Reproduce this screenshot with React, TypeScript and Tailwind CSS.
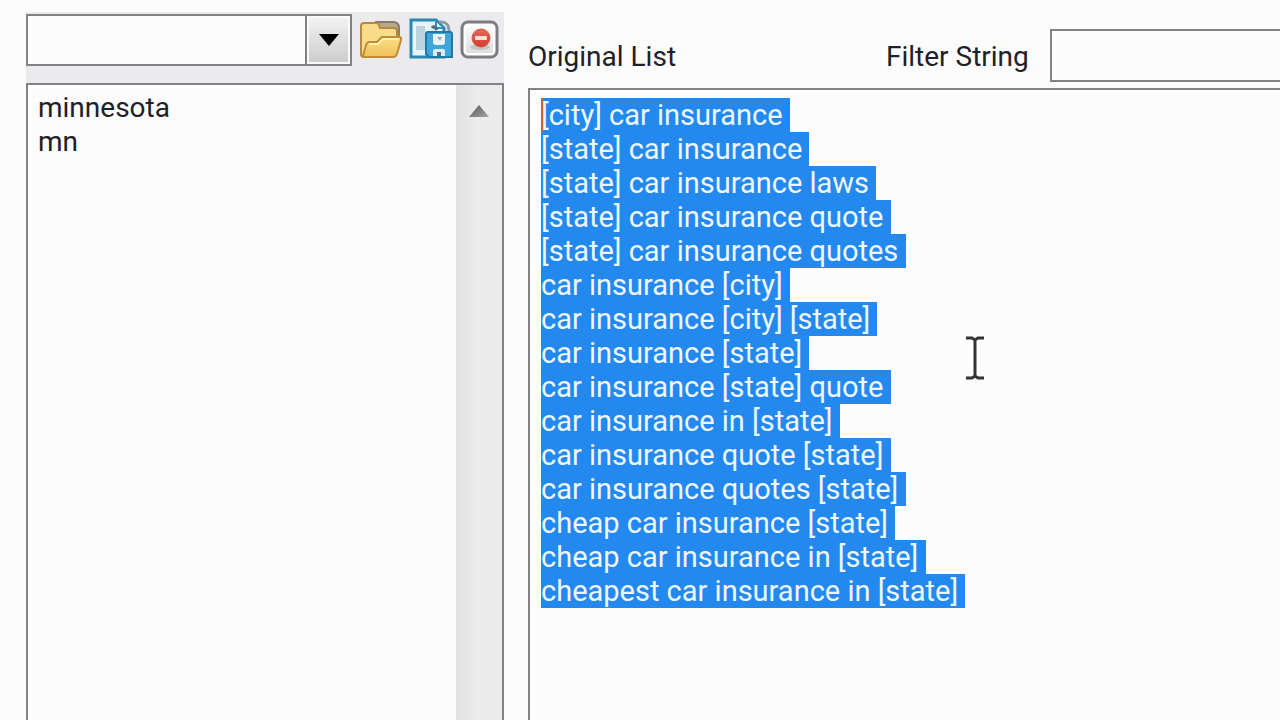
import { useEffect, useRef } from "react";

const keywords = [
  "[city] car insurance",
  "[state] car insurance",
  "[state] car insurance laws",
  "[state] car insurance quote",
  "[state] car insurance quotes",
  "car insurance [city]",
  "car insurance [city] [state]",
  "car insurance [state]",
  "car insurance [state] quote",
  "car insurance in [state]",
  "car insurance quote [state]",
  "car insurance quotes [state]",
  "cheap car insurance [state]",
  "cheap car insurance in [state]",
  "cheapest car insurance in [state]",
];

const tokens = ["minnesota", "mn"];

function FolderIcon() {
  return (
    <svg viewBox="0 0 46 42" className="h-[42px] w-[46px]" aria-hidden="true">
      <defs>
        <linearGradient id="folder" x1="0" y1="0" x2="0" y2="1">
          <stop offset="0" stopColor="#fbdf85" />
          <stop offset="1" stopColor="#f0c05a" />
        </linearGradient>
      </defs>
      <path d="M18 3h17q6 0 6 6v8H17z" fill="#b9a78a" stroke="#8a7a68" strokeWidth="2" />
      <path
        d="M3 35V7q0-3 3-3h12q2 0 3 2l1 3h14q3 0 3 3v10l-2 13q0 3-3 3H6q-3 0-3-3z"
        fill="#f9dc8a"
        stroke="#b48a45"
        strokeWidth="2"
      />
      <path
        d="M5 37l3-11q1-3 4-3h7l5-5h17q3 0 2 3l-4 14q-1 3-4 3H7q-2 0-2-1z"
        fill="url(#folder)"
        stroke="#c08c34"
        strokeWidth="2"
      />
      <path d="M11 25h9l5-5h15" fill="none" stroke="#fff0b4" strokeWidth="2" />
    </svg>
  );
}

function SaveIcon() {
  return (
    <svg viewBox="0 0 46 44" className="h-11 w-[46px]" aria-hidden="true">
      <path d="M2 2h25l8 8v29H2z" fill="#e4f4fb" stroke="#2a87b4" strokeWidth="3" />
      <path d="M7 8h9v24H7z" fill="#bdd3de" />
      <path d="M27 4v6h7" fill="#d3edf7" stroke="#3c8fb5" strokeWidth="2" />
      <path d="M30 4q10-1 10 9" fill="none" stroke="#8d9aa2" strokeWidth="3" />
      <path d="M23 10q2-3 5 2" fill="none" stroke="#4b6a7a" strokeWidth="3" />
      <path d="M19 14h22q2 0 2 2v23H20l-3-3V16q0-2 2-2z" fill="#3fa5da" stroke="#1e78a8" strokeWidth="2" />
      <path d="M24 16h12v8q0 3-3 3h-6q-3 0-3-3z" fill="#e9f4fa" />
      <path d="M28 19h5l-2 4z" fill="#9ca9af" />
      <path d="M24 38v-5q0-2 2-2h8q2 0 2 2v5z" fill="#dcebf3" />
      <path d="M28 34h4v4h-4z" fill="#4d7286" />
    </svg>
  );
}

function RemoveIcon() {
  return (
    <svg viewBox="0 0 40 40" className="size-10" aria-hidden="true">
      <defs>
        <linearGradient id="plate" x1="0" y1="0" x2="0" y2="1">
          <stop offset="0" stopColor="#fdfdfd" />
          <stop offset="1" stopColor="#dedede" />
        </linearGradient>
        <linearGradient id="red" x1="0" y1="0" x2="0" y2="1">
          <stop offset="0" stopColor="#ea6a58" />
          <stop offset="1" stopColor="#d33a2b" />
        </linearGradient>
      </defs>
      <rect x="2" y="2" width="35" height="35" rx="6" fill="#fff" stroke="#7d7d80" strokeWidth="3" />
      <rect x="6" y="6" width="27" height="27" rx="3" fill="url(#plate)" />
      <ellipse cx="20" cy="27" rx="10" ry="3" fill="#c4c4c4" />
      <circle cx="21" cy="18" r="9" fill="url(#red)" stroke="#c4604f" />
      <rect x="15" y="16" width="12" height="4" rx="1" fill="#fbe3d6" />
    </svg>
  );
}

export default function App() {
  const original = useRef<HTMLTextAreaElement>(null);

  useEffect(() => {
    original.current?.focus();
    original.current?.select();
  }, []);

  return (
    <main className="relative flex h-screen min-w-0 gap-6 overflow-hidden bg-[#fcfcfc] pl-[26px] font-[Roboto,sans-serif] text-[28px] leading-[34px] text-[#202028]">
      <section className="mt-3 flex w-[478px] shrink-0 flex-col bg-[#ebebed]">
        <div className="flex h-[71px] items-start gap-1 pt-0.5">
          <div className="grid w-[326px]">
            <select
              aria-label="Saved list"
              className="col-start-1 row-start-1 h-[52px] w-full appearance-none border-2 border-[#828286] bg-[#fcfcfc] px-2 outline-none"
            >
              <option value=""></option>
            </select>
            <span className="pointer-events-none col-start-1 row-start-1 my-0.5 mr-0.5 flex w-[45px] justify-self-end border-l-2 border-[#828286] bg-[#fafafa] p-0.5">
              <span className="flex flex-1 items-center justify-center bg-linear-to-b from-[#f2f2f2] to-[#cdcdcd]">
                <svg viewBox="0 0 20 12" className="h-3 w-5" aria-hidden="true">
                  <path d="M0 0h20L10 12z" fill="#000" />
                </svg>
              </span>
            </span>
          </div>
          <div className="flex flex-1 items-center justify-between pt-1 pl-0.5 pr-1">
            <button type="button" aria-label="Open list">
              <FolderIcon />
            </button>
            <button type="button" aria-label="Save list">
              <SaveIcon />
            </button>
            <button type="button" aria-label="Remove list">
              <RemoveIcon />
            </button>
          </div>
        </div>
        <div className="flex flex-1 border-2 border-b-0 border-[#828286] bg-[#fcfcfc]">
          <textarea
            aria-label="Tokens"
            spellCheck={false}
            defaultValue={tokens.join("\n")}
            className="min-w-0 flex-1 resize-none overflow-hidden bg-transparent px-2.5 py-1.5 outline-none"
          />
          <div className="w-[46px] bg-linear-to-r from-[#e2e2e2] via-[#ececec] to-[#ececec]">
            <button type="button" aria-label="Scroll up" className="flex h-[52px] w-full items-center justify-center">
              <svg viewBox="0 0 20 12" className="h-3 w-5" aria-hidden="true">
                <defs>
                  <linearGradient id="up" x1="0" y1="0" x2="1" y2="1">
                    <stop offset="0" stopColor="#555" />
                    <stop offset="1" stopColor="#a5a5a5" />
                  </linearGradient>
                </defs>
                <path d="M10 0l10 12H0z" fill="url(#up)" />
              </svg>
            </button>
          </div>
        </div>
      </section>

      <section className="flex min-w-0 flex-1 flex-col">
        <div className="flex h-[88px] items-end pb-1.5">
          <label htmlFor="original" className="w-[358px] shrink-0 pb-2">
            Original List
          </label>
          <label htmlFor="filter" className="w-[164px] shrink-0 pb-2">
            Filter String
          </label>
          <input
            id="filter"
            type="text"
            className="h-[53px] min-w-0 flex-1 border-2 border-r-0 border-[#828286] bg-[#fcfcfc] px-2 outline-none"
          />
        </div>
        <div className="relative flex flex-1">
          <textarea
            id="original"
            ref={original}
            spellCheck={false}
            defaultValue={keywords.join("\n") + "\n"}
            className="min-w-0 flex-1 resize-none overflow-hidden border-2 border-r-0 border-b-0 border-[#828286] bg-[#fcfcfc] px-[11px] py-2 text-[29px] leading-[34px] outline-none selection:bg-[#2489ee] selection:text-[#eef6ff]"
          />
          <span className="pointer-events-none absolute top-2.5 left-[13px] h-[34px] w-0.5 bg-[#c0683c]" />
        </div>
      </section>

      <svg viewBox="0 0 20 44" className="pointer-events-none absolute top-[336px] left-[965px] h-11 w-5" aria-hidden="true">
        <path d="M1 2h6l3 2 3-2h6M10 4v36M1 42h6l3-2 3 2h6" fill="none" stroke="#333" strokeWidth="3" />
      </svg>
    </main>
  );
}
